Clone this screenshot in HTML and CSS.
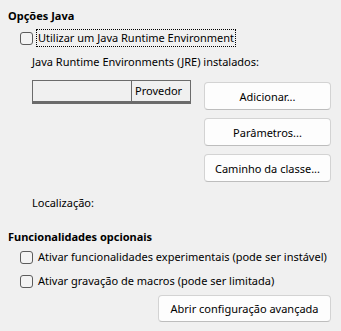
FILE: index.html
```html
<html>

<head>
    <title>Opções Java</title>
    <link rel="stylesheet" href="styles.css">
</head>

<body>
    <div class="options">
        <h3 class="section-title">Opções Java</h3>
        <label class="check-row">
            <span class="check-box"></span>
            <span class="check-label focused">Utilizar um Java Runtime Environment</span>
        </label>

        <div class="indent">
            <div class="field-label">Java Runtime Environments (JRE) instalados:</div>
            <div class="jre-panel">
                <div class="jre-list">
                    <div class="jre-header">
                        <div class="col-blank"></div>
                        <div class="col-vendor">Provedor</div>
                    </div>
                </div>
                <div class="button-col">
                    <button class="btn" type="button">Adicionar...</button>
                    <button class="btn" type="button">Parâmetros...</button>
                    <button class="btn" type="button">Caminho da classe...</button>
                </div>
            </div>
            <div class="location">Localização:</div>
        </div>

        <h3 class="section-title second">Funcionalidades opcionais</h3>
        <label class="check-row first-opt">
            <span class="check-box"></span>
            <span class="check-label">Ativar funcionalidades experimentais (pode ser instável)</span>
        </label>
        <label class="check-row">
            <span class="check-box"></span>
            <span class="check-label">Ativar gravação de macros (pode ser limitada)</span>
        </label>

        <div class="footer">
            <button class="btn btn-wide" type="button">Abrir configuração avançada</button>
        </div>
    </div>
</body>

</html>
```

FILE: styles.css
```css
body {
    margin: 0;
    padding: 0;
    background: #f0f0f0;
    font-family: "Noto Sans", sans-serif;
    font-size: 11px;
    color: #000;
}

.options {
    padding: 8px 10px 0 8px;
}

.section-title {
    margin: 0;
    font-size: 11px;
    font-weight: bold;
    line-height: 16px;
    white-space: nowrap;
}

.section-title.second {
    margin-top: 18px;
}

.check-row {
    display: flex;
    align-items: center;
    margin-top: 6px;
    padding-left: 12px;
    height: 16px;
    line-height: 16px;
    white-space: nowrap;
}

.check-row.first-opt {
    margin-top: 4px;
}

.check-row + .check-row {
    margin-top: 8px;
}

.check-box {
    width: 11px;
    height: 11px;
    border: 1px solid #5c5c5c;
    border-radius: 3px;
    background: #f3f3f3;
    flex-shrink: 0;
}

.check-label {
    margin-left: 4px;
    padding: 0 1px;
}

.check-label.focused {
    outline: 1px dotted #000;
}

.indent {
    padding-left: 24px;
}

.field-label {
    margin-top: 8px;
    line-height: 16px;
}

.jre-panel {
    display: flex;
    justify-content: space-between;
    margin-top: 10px;
}

.jre-list {
    width: 157px;
    height: 20px;
    border: 1px solid #6b6b6b;
    border-bottom: 3px solid #6b6b6b;
    box-sizing: content-box;
}

.jre-header {
    display: flex;
    height: 20px;
    line-height: 20px;
}

.col-blank {
    width: 98px;
    border-right: 1px solid #6b6b6b;
}

.col-vendor {
    padding-left: 3px;
}

.button-col {
    display: flex;
    flex-direction: column;
    gap: 8px;
    margin-top: 2px;
}

.btn {
    height: 28px;
    width: 127px;
    background: #fdfdfd;
    border: 1px solid #d3d3d3;
    border-bottom-color: #bdbdbd;
    border-radius: 4px;
    font-family: "Noto Sans", sans-serif;
    font-size: 11px;
    color: #000;
    padding: 0;
}

.location {
    margin-top: 13px;
    line-height: 16px;
}

.footer {
    display: flex;
    justify-content: flex-end;
    margin-top: 6px;
}

.btn-wide {
    width: 173px;
    height: 27px;
}
```
